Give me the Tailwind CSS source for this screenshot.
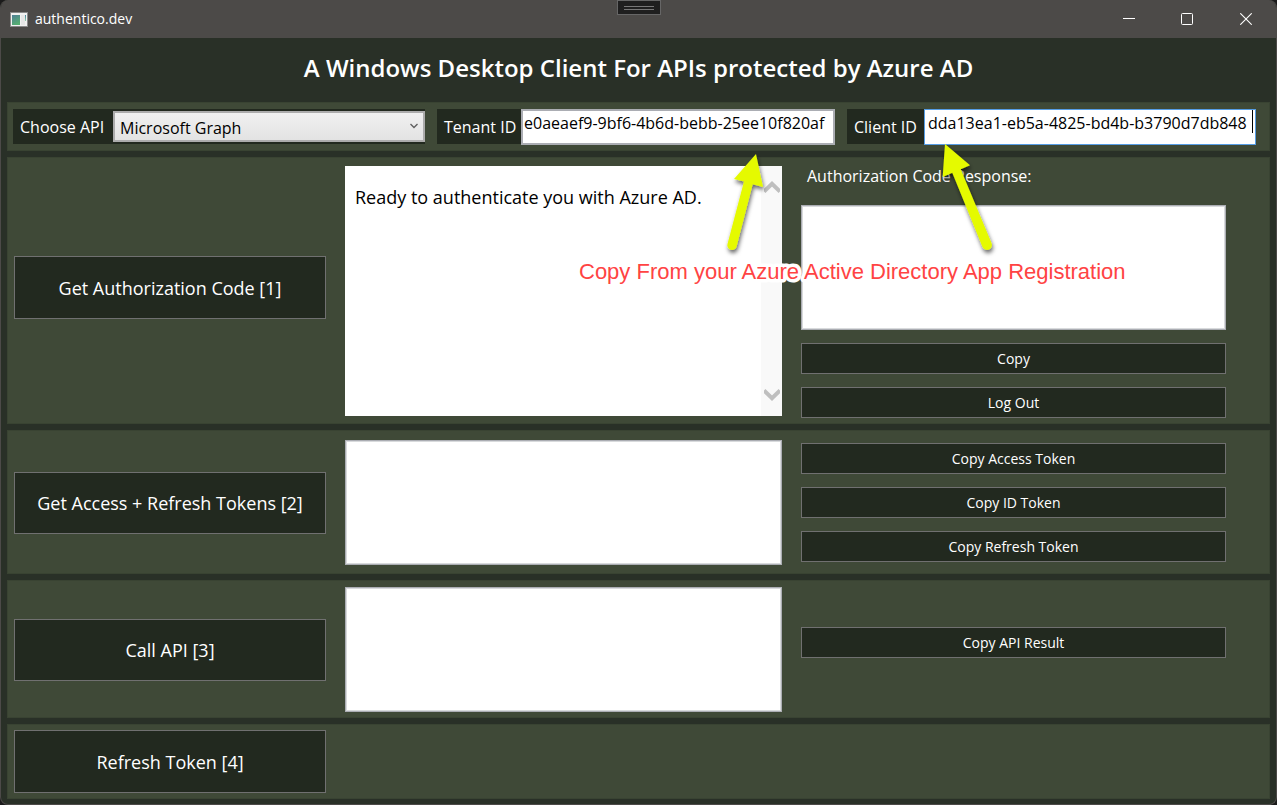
<!DOCTYPE html>
<html lang="en">
<head>
<meta charset="utf-8">
<meta name="viewport" content="width=device-width, initial-scale=1">
<title>authentico.dev</title>
<script src="https://cdn.jsdelivr.net/npm/@tailwindcss/browser@4"></script>
</head>
<body class="bg-[#1b1b1b] font-['Open_Sans','Noto_Sans',sans-serif] text-white">
<div class="relative flex min-h-screen flex-col overflow-hidden rounded-lg border-x border-b border-[#4c4a48] bg-[#293027]">
  <header class="relative flex h-[38px] items-center bg-[#4c4a48] pl-[9px]">
    <svg class="h-[15px] w-[18px]" viewBox="0 0 18 15" aria-hidden="true">
      <defs>
        <linearGradient id="pane" x1="0" y1="0" x2="0.4" y2="1"><stop offset="0" stop-color="#4f7f96"/><stop offset="1" stop-color="#55ad72"/></linearGradient>
        <linearGradient id="side" x1="0" y1="0" x2="0" y2="1"><stop offset="0" stop-color="#4682a0"/><stop offset="1" stop-color="#8fd0a8"/></linearGradient>
      </defs>
      <rect x=".5" y=".5" width="17" height="14" fill="#f1f1f1" stroke="#8a8a8a"/>
      <rect x="2" y="3" width="8" height="10" fill="url(#pane)"/>
      <rect x="11" y="3" width="4" height="10" fill="#e6e6e6"/>
      <rect x="15" y="3" width="1" height="6" fill="url(#side)"/>
    </svg>
    <span class="ml-[7px] text-sm">authentico.dev</span>
    <div class="absolute top-0 left-1/2 flex h-[15px] w-11 -translate-x-1/2 flex-col justify-center gap-0.5 border border-[#666] bg-[#1f1f1f] px-1.5">
      <div class="h-px bg-[#777]"></div>
      <div class="h-px bg-[#777]"></div>
    </div>
    <div class="ml-auto flex h-full">
      <button aria-label="Minimize" class="flex w-[58px] items-center justify-center"><svg class="size-3" viewBox="0 0 12 12" fill="none" stroke="#fff"><path d="M0 5.5h12"/></svg></button>
      <button aria-label="Maximize" class="flex w-[58px] items-center justify-center"><svg class="size-3" viewBox="0 0 12 12" fill="none" stroke="#fff"><rect x=".5" y=".5" width="11" height="11" rx="1"/></svg></button>
      <button aria-label="Close" class="flex w-[60px] items-center justify-center"><svg class="size-3" viewBox="0 0 12 12" fill="none" stroke="#fff" stroke-width="1.1"><path d="M.3.3l11.4 11.4M11.7.3L.3 11.7"/></svg></button>
    </div>
  </header>

  <h1 class="flex h-16 items-center justify-center pb-1 text-2xl font-semibold">A Windows Desktop Client For APIs protected by Azure AD</h1>

  <main class="flex flex-1 flex-col gap-1.5 px-1.5 pb-[5px]">
    <div class="grid grid-cols-[412fr_398fr_409fr] gap-3 border border-[#394332] bg-[#3f4937] py-1.5 pr-[13px] pl-[5px]">
      <div class="flex h-[35px] items-center bg-[#22291f]">
        <label for="api" class="w-[100px] pt-px pl-[7px] text-base whitespace-nowrap">Choose API</label>
        <div class="relative flex-1">
          <select id="api" class="h-[31px] w-full appearance-none border-2 border-[#acacac] bg-linear-to-b from-[#f0f0f0] to-[#e3e3e3] px-[5px] pt-0.5 text-base text-black"><option>Microsoft Graph</option></select>
          <svg class="pointer-events-none absolute top-3 right-[7px] h-[6px] w-2" viewBox="0 0 8 6" fill="none" stroke="#606060" stroke-width="1.4"><path d="M.5 1L4 4.5L7.500 1"/></svg>
        </div>
      </div>
      <div class="flex h-[35px] items-center bg-[#22291f]">
        <label for="tenant" class="w-[84px] pt-px pl-[7px] text-base whitespace-nowrap">Tenant ID</label>
        <input id="tenant" type="text" value="e0aeaef9-9bf6-4b6d-bebb-25ee10f820af" class="h-9 min-w-0 flex-1 border-2 border-[#abadb3] bg-white px-px pb-2 text-base text-black">
      </div>
      <div class="flex h-[35px] items-center bg-[#22291f]">
        <label for="client" class="w-[77px] pt-px pl-[7px] text-base whitespace-nowrap">Client ID</label>
        <div class="relative flex flex-1">
          <input id="client" type="text" value="dda13ea1-eb5a-4825-bd4b-b3790d7db848" class="h-9 w-full min-w-0 border border-[#569de5] bg-white px-[3px] pb-2 text-base text-black">
          <span class="absolute top-px right-[3px] h-[23px] w-px bg-black"></span>
        </div>
      </div>
    </div>

    <section class="grid grid-cols-[312fr_437fr_425fr] items-center gap-[19px] border border-[#394332] bg-[#3f4937] py-[5px] pr-[43px] pl-1.5">
      <button class="mb-1.5 h-[63px] border border-[#707070] bg-[#22291f] text-lg">Get Authorization Code [1]</button>
      <div class="flex h-[250px] bg-white text-black">
        <p class="flex-1 px-2.5 py-[18px] text-lg leading-[26px]">Ready to authenticate you with Azure AD.</p>
        <div class="flex w-[21px] flex-col items-center justify-between bg-[#f9f9f9] py-[15px]">
          <svg class="h-3 w-4" viewBox="0 0 16 12" fill="none" stroke="#bfbfbf" stroke-width="4"><path d="M0 10.500L8 2.800L16 10.500"/></svg>
          <svg class="h-3 w-4" viewBox="0 0 16 12" fill="none" stroke="#bfbfbf" stroke-width="4"><path d="M0 1.500L8 9.200L16 1.500"/></svg>
        </div>
      </div>
      <div class="flex flex-col">
        <label for="response" class="h-[42px] pl-1.5 text-base leading-[26px]">Authorization Code Response:</label>
        <textarea id="response" class="h-[125px] resize-none border border-[#abadb3] bg-white text-black shadow-[inset_0_0_0_1px_#d8dadc]"></textarea>
        <button class="mt-[13px] h-[31px] border border-[#707070] bg-[#22291f] text-sm">Copy</button>
        <button class="mt-[13px] h-[31px] border border-[#707070] bg-[#22291f] text-sm">Log Out</button>
      </div>
    </section>

    <section class="grid grid-cols-[312fr_437fr_425fr] items-center gap-[19px] border border-[#394332] bg-[#3f4937] pt-[9px] pb-2 pr-[43px] pl-1.5">
      <button class="h-[62px] border border-[#707070] bg-[#22291f] text-lg">Get Access + Refresh Tokens [2]</button>
      <textarea aria-label="Tokens" class="h-[125px] resize-none border border-[#abadb3] bg-white text-black shadow-[inset_0_0_0_1px_#d8dadc]"></textarea>
      <div class="flex flex-col gap-[13px]">
        <button class="h-[31px] border border-[#707070] bg-[#22291f] text-sm">Copy Access Token</button>
        <button class="h-[31px] border border-[#707070] bg-[#22291f] text-sm">Copy ID Token</button>
        <button class="h-[31px] border border-[#707070] bg-[#22291f] text-sm">Copy Refresh Token</button>
      </div>
    </section>

    <section class="grid grid-cols-[312fr_437fr_425fr] items-center gap-[19px] border border-[#394332] bg-[#3f4937] pt-1.5 pb-[5px] pr-[43px] pl-1.5">
      <button class="h-[62px] border border-[#707070] bg-[#22291f] text-lg">Call API [3]</button>
      <textarea aria-label="API result" class="h-[125px] resize-none border border-[#abadb3] bg-white text-black shadow-[inset_0_0_0_1px_#d8dadc]"></textarea>
      <button class="mb-[14px] h-[31px] border border-[#707070] bg-[#22291f] text-sm">Copy API Result</button>
    </section>

    <section class="grid flex-1 grid-cols-[312fr_437fr_425fr] items-start gap-[19px] border border-[#394332] bg-[#3f4937] pt-[5px] pb-[5px] pr-[43px] pl-1.5">
      <button class="h-[63px] border border-[#707070] bg-[#22291f] text-lg">Refresh Token [4]</button>
    </section>
  </main>

  <svg class="pointer-events-none absolute top-0 -left-px h-[320px] w-[1277px]" viewBox="0 0 1277 320">
    <defs>
      <filter id="shadow" x="-30%" y="-20%" width="160%" height="150%"><feDropShadow dx="1" dy="3" stdDeviation="2" flood-color="#000" flood-opacity=".6"/></filter>
    </defs>
    <g fill="#e5fa00" filter="url(#shadow)">
      <path d="M756 154L734 179L744 181.500L727.500 244A4.700 4.700 0 0 0 736.600 246.500L752.700 184.300L763 187Z"/>
      <path d="M945 144L942.700 177L952.300 172.700L982.500 247A4.900 4.900 0 0 0 991.500 243L960.700 169.300L970 165.300Z"/>
    </g>
    <text x="579" y="279" font-family="Liberation Sans, Arial, sans-serif" font-size="22" fill="#ff4343" stroke="#fff" stroke-width="7" stroke-linejoin="round" paint-order="stroke">Copy From your Azure Active Directory App Registration</text>
  </svg>
</div>
</body>
</html>
